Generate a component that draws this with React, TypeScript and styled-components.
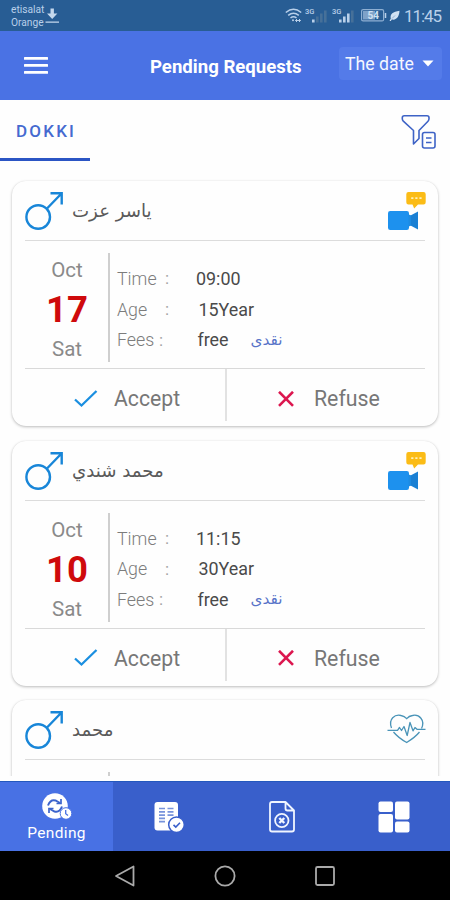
import React from "react";
import styled, { createGlobalStyle } from "styled-components";

const GlobalStyle = createGlobalStyle`
  * { box-sizing: border-box; }
  body { margin: 0; background: #fefefe; font-family: Roboto, "DejaVu Sans", sans-serif; }
  svg { display: block; flex: none; }
`;

const ButtonBase = styled.button`
  margin: 0;
  padding: 0;
  border: 0;
  background: none;
  font-family: inherit;
`;

const Screen = styled.div`
  width: 450px;
  height: 900px;
  display: flex;
  flex-direction: column;
  overflow: hidden;
  background: #fefefe;
`;

const StatusBar = styled.div`
  height: 31px;
  flex: none;
  display: flex;
  align-items: center;
  justify-content: space-between;
  padding: 0 9px 0 11px;
  background: #285d94;
  color: #b9d0ea;
`;

const StatusGroup = styled.div`
  display: flex;
  align-items: center;
  height: 31px;
`;

const SignalSlot = styled.div`
  margin-left: 3px;
`;

const BatterySlot = styled.div`
  margin: 0 2px 0 5px;
`;

const Carrier = styled.div`
  font-size: 10.2px;
  line-height: 13.5px;
  width: 34px;
  white-space: nowrap;
  padding-top: 1px;
`;

const Clock = styled.span`
  font-size: 17px;
  line-height: 31px;
  margin-left: 4px;
  width: 37px;
  letter-spacing: -1.1px;
  padding-top: 1px;
  white-space: nowrap;
`;

const Header = styled.header`
  height: 69px;
  flex: none;
  display: flex;
  align-items: center;
  padding: 0 8px 0 24px;
  background: #4a72e4;
  color: #fff;
`;

const Title = styled.h1`
  flex: 1;
  margin: 0;
  padding: 2px 0 0 102px;
  font-size: 18.6px;
  font-weight: 700;
  line-height: 24px;
  white-space: nowrap;
`;

const SortSelect = styled(ButtonBase)`
  width: 103px;
  height: 33px;
  margin-bottom: 4px;
  border-radius: 4px;
  background: #547be9;
  color: #f4f7ff;
  display: flex;
  align-items: center;
  justify-content: space-between;
  padding: 0 8px 0 6px;
  font-size: 17.7px;
`;

const Tabs = styled.div`
  height: 60.5px;
  flex: none;
  display: flex;
  justify-content: space-between;
  padding-right: 14px;
`;

const Tab = styled.div`
  width: 90px;
  height: 60.5px;
  border-bottom: 3px solid #2b55c4;
  padding: 1px 0 0 16px;
  font-size: 17px;
  line-height: 61px;
  font-weight: 500;
  letter-spacing: 2.2px;
  color: #456ad0;
`;

const FilterSlot = styled.div`
  padding-top: 14px;
`;

const List = styled.main`
  height: 615.5px;
  flex: none;
  overflow: hidden;
  padding: 20.5px 12px 0;
  display: flex;
  flex-direction: column;
  gap: 14.7px;
`;

const ListGap = styled.div`
  height: 5px;
  flex: none;
`;

const Card = styled.article`
  height: 245px;
  flex: none;
  padding: 0 13px;
  border-radius: 14px;
  background: #fefefe;
  box-shadow: 0 1px 3px rgba(0, 0, 0, 0.26), 0 0 1px rgba(0, 0, 0, 0.08);
`;

const CardHead = styled.div`
  height: 60px;
  border-bottom: 1.5px solid #dcdcdc;
  display: flex;
`;

const Patient = styled.div`
  flex: 1;
  direction: rtl;
  text-align: right;
  display: flex;
  justify-content: flex-end;
  font-family: "DejaVu Sans", sans-serif;
  font-size: 18.2px;
  line-height: 59px;
  color: #5a5a5a;
  white-space: nowrap;
`;

const GenderSlot = styled.div`
  width: 47px;
  padding-top: 10px;
`;

const KindSlot = styled.div`
  width: 38px;
  padding-top: 10px;
`;

const CardBody = styled.div`
  height: 128px;
  border-bottom: 1.5px solid #d9d9d9;
  display: flex;
`;

const DateColumn = styled.div`
  width: 85px;
  height: 109px;
  margin-top: 12px;
  border-right: 2.5px solid #cfcfcf;
  display: flex;
  flex-direction: column;
  align-items: center;
  font-size: 20.5px;
  color: #8a8a8a;
  padding-left: 1px;
`;

const DateWord = styled.span`
  line-height: 34px;
`;

const Day = styled.strong`
  font-size: 36.5px;
  font-weight: 700;
  line-height: 45px;
  color: #cf0a0c;
`;

const Details = styled.div`
  padding: 22px 0 0 7px;
`;

const DetailRow = styled.div`
  height: 30.7px;
  display: flex;
  align-items: center;
  font-size: 18px;
  white-space: nowrap;
`;

const Label = styled.span<{ $width: number }>`
  width: ${(p) => p.$width}px;
  font-weight: 300;
  font-size: 17.8px;
  color: #7c7c7c;
`;

const Colon = styled.span<{ $width: number }>`
  width: ${(p) => p.$width}px;
  color: #a3a3a3;
  font-size: 17px;
`;

const Value = styled.span`
  color: #4a4a4a;
  font-size: 17.9px;
`;

const Payment = styled.span`
  margin-left: 22px;
  font-family: "DejaVu Sans", sans-serif;
  font-size: 15.3px;
  color: #5873c8;
`;

const Actions = styled.div`
  height: 57px;
  display: flex;
`;

const AcceptButton = styled(ButtonBase)`
  width: 202px;
  height: 52px;
  border-right: 2.5px solid #e2e2e2;
  display: flex;
  align-items: center;
  gap: 16px;
  padding: 7px 0 0 49px;
  font-size: 21.2px;
  color: #777;
`;

const RefuseButton = styled(ButtonBase)`
  width: 198px;
  height: 57px;
  display: flex;
  align-items: center;
  gap: 20px;
  padding: 2px 0 0 51px;
  font-size: 21.3px;
  color: #777;
`;

const BottomNav = styled.nav`
  height: 70px;
  flex: none;
  display: grid;
  grid-template-columns: 113px 112px 113px 112px;
  background: #395fcb;
  border-top: 1px solid #2458bd;
`;

const NavItem = styled(ButtonBase)<{ $active?: boolean }>`
  display: flex;
  flex-direction: column;
  align-items: center;
  justify-content: ${(p) => (p.$active ? "flex-start" : "center")};
  padding-top: ${(p) => (p.$active ? 11 : 0)}px;
  background: ${(p) => (p.$active ? "#4871e4" : "transparent")};
  color: #fff;
`;

const NavLabel = styled.span`
  font-size: 15.5px;
  line-height: 20px;
  margin-top: 3px;
  letter-spacing: 0.35px;
`;

const SystemNav = styled.div`
  height: 49px;
  flex: none;
  background: #000;
  display: flex;
  justify-content: center;
  align-items: center;
  gap: 78px;
`;

const DownloadIcon = () => (
  <svg width="15" height="16" viewBox="0 0 15 16" fill="#c4d8ed">
    <path d="M5.500 .5h3.400v4.900h3.500L7.200 11 2 5.400h3.500zM.5 13.500h13.500v1.200H.5z" />
  </svg>
);

const WifiIcon = () => (
  <svg width="17" height="15" viewBox="0 0 17 15" fill="none" stroke="#b9d0ea" strokeWidth="1.500">
    <path d="M.8 4.500Q8.500-2 16.200 4.500M3.200 7.300Q8.500 3 13.800 7.300M5.500 10Q8.500 7.500 11.500 10" />
    <circle cx="8" cy="12.300" r="1" fill="#b9d0ea" stroke="none" />
    <path d="M10.500 12.500h5M12 11l-1.500 1.500L12 14M14 11l1.500 1.500L14 14" strokeWidth="1" />
  </svg>
);

const SignalIcon = ({ bars }: { bars: number }) => (
  <svg width="24" height="18" viewBox="0 0 24 18">
    <text x="0" y="7" fontSize="7.500" fontWeight="500" fill="#b9d0ea" fontFamily="Roboto">3G</text>
    {[0, 1, 2, 3].map((i) => (
      <rect
        key={i}
        x={7 + i * 4}
        y={12.5 - i * 3}
        width="2.600"
        height={3 + i * 3}
        fill={i < bars ? "#b9d0ea" : "#467099"}
      />
    ))}
  </svg>
);

const BatteryIcon = () => (
  <svg width="26" height="13" viewBox="0 0 26 13">
    <rect x=".6" y=".6" width="22" height="11.300" rx="1.500" fill="none" stroke="#8eafd2" strokeWidth="1.200" />
    <rect x="2" y="2" width="12" height="8.500" fill="#7fa2c8" />
    <path d="M24.500 4v5" stroke="#b9d0ea" strokeWidth="1.500" />
    <text x="6.500" y="10" fontSize="10" fontWeight="700" fill="#d0e1f3" fontFamily="Roboto">54</text>
  </svg>
);

const LeafIcon = () => (
  <svg width="11" height="12" viewBox="0 0 11 12">
    <path d="M10.500.8C4 2 .8 4 1.800 8.500L.5 11h1.300l1-1.500C8 10.500 10.300 6 10.500.8z" fill="#d0e1f3" />
    <path d="M3 8.500L6 5.500" stroke="#6c93bd" strokeWidth=".6" />
  </svg>
);

const MenuIcon = () => (
  <svg width="24" height="19" viewBox="0 0 24 19" fill="#fff">
    <rect y="1" width="24" height="2.700" rx=".5" />
    <rect y="8" width="24" height="2.700" rx=".5" />
    <rect y="15" width="24" height="2.700" rx=".5" />
  </svg>
);

const FilterIcon = () => (
  <svg width="35" height="36" viewBox="0 0 35 36" fill="none" stroke="#3e63c6" strokeWidth="1.600" strokeLinejoin="round">
    <path d="M3.300 1.800H26q2 0 2 2v1q0 1.400-1 2.400L18 16.500v8L12.500 30V16.500L2.300 7.200q-1-1-1-2.400v-1q0-2 2-2z" />
    <rect x="21.500" y="18.500" width="12.500" height="15.500" rx="2" />
    <path d="M25 24h5.500M25 28.500h5.500" />
  </svg>
);

const MaleIcon = () => (
  <svg width="38" height="40" viewBox="0 0 38 40" fill="none" stroke="#1886d8" strokeWidth="2.400">
    <circle cx="13.200" cy="26" r="11.800" />
    <path d="M22 17.500L36.500 2.500M25.500 2.200h11.200V13.500" />
  </svg>
);

const VideoIcon = () => (
  <svg width="40" height="40" viewBox="0 0 40 40">
    <path d="M21.500 1h15q2.200 0 2.200 2.200v8q0 2.200-2.200 2.200H31l-3.800 4.200-1.700-4.200h-4q-2.200 0-2.200-2.200V3.200Q19.300 1 21.500 1z" fill="#fbbc16" />
    <path d="M24.200 7.200h2.200M28.300 7.200h2.200M32.400 7.200h2.200" stroke="#fff0b8" strokeWidth="1.800" />
    <rect x="1" y="20" width="21" height="19" rx="2.200" fill="#1d91ee" />
    <path d="M21.500 23.500l2.500.8v10.400l-2.500.8z" fill="#1d8be2" />
    <path d="M24 24.300l7-3.800v18l-7-3.800z" fill="#1a80d4" />
  </svg>
);

const HeartIcon = () => (
  <svg width="40" height="40" viewBox="0 0 40 40" fill="none" stroke="#4a94b8" strokeWidth="1.300" strokeLinejoin="round">
    <path d="M4.500 18C1 9 8 4 14 5.500q3.500.5 5.700 3.200Q22 6 25.500 5.500C32 4 38.500 10 34.500 18.500M6.500 22q5 6 13.200 10.500Q28.500 27 32.500 22" />
    <path d="M.5 20.300h10l2-2.800 2 3 2.500-4 3.200 9L23 12.500l3 8.300 2-3.300 2 1.800h8.500" />
  </svg>
);

const CheckIcon = () => (
  <svg width="24" height="20" viewBox="0 0 24 20" fill="none" stroke="#1b8fe0" strokeWidth="2.300">
    <path d="M1 10.500l6.500 6L22.500 2" />
  </svg>
);

const CrossIcon = () => (
  <svg width="16" height="16" viewBox="0 0 16 16" stroke="#dc174f" strokeWidth="2.600">
    <path d="M1 .8l14 14M15 .8L1 14.800" />
  </svg>
);

const PendingIcon = () => (
  <svg width="32" height="27" viewBox="0 0 32 27">
    <circle cx="14" cy="13" r="12.800" fill="#fff" />
    <g fill="none" stroke="#3c64cc" strokeWidth="2">
      <path d="M7 12.500Q9.500 6 14.500 7.500l4.500 2.500M21 13.500Q18.500 20 13.500 18.500l-4.500-2.500" />
      <path d="M20 6v4.500h-4.500M8 20v-4.500h4.500" strokeWidth="1.700" />
    </g>
    <circle cx="25" cy="20.500" r="5.800" fill="#fff" stroke="#4871e4" strokeWidth="1" />
    <path d="M24.700 17v3.700l2.300 1.700" fill="none" stroke="#4871e4" strokeWidth="1.300" />
  </svg>
);

const ApprovedIcon = () => (
  <svg width="30" height="32" viewBox="0 0 30 32">
    <rect x=".5" y="1" width="23.500" height="28.500" rx="3" fill="#fff" />
    <path d="M5 7.500h6M13.500 7.500h6M5 10.800h6M13.500 10.800h6M5 14.100h6M13.500 14.100h6M5 17.400h6M5 20.700h6" stroke="#7793db" strokeWidth="1.700" />
    <circle cx="22.500" cy="23.800" r="7.800" fill="#fff" stroke="#395fcb" strokeWidth="1.500" />
    <path d="M19.500 23.800l2.300 2.200 4.200-4.300" fill="none" stroke="#395fcb" strokeWidth="1.600" />
  </svg>
);

const RejectedIcon = () => (
  <svg width="26" height="32" viewBox="0 0 26 32" fill="none" stroke="#f0f5ff" strokeWidth="1.800" strokeLinejoin="round">
    <path d="M3 1h13.500L25 9.500V28.500q0 2-2 2H3q-2 0-2-2V3q0-2 2-2zM16.500 1v6.500q0 2 2 2H25" />
    <circle cx="12.800" cy="19.500" r="6.700" />
    <path d="M10.300 17l5 5M15.300 17l-5 5" strokeWidth="2.400" />
  </svg>
);

const DashboardIcon = () => (
  <svg width="32" height="32" viewBox="0 0 32 32" fill="#fff">
    <rect x=".5" y=".5" width="14.500" height="10.500" rx="2" />
    <rect x="17" y=".5" width="14.500" height="18" rx="2" />
    <rect x=".5" y="13" width="14.500" height="18.500" rx="2" />
    <rect x="17" y="20.500" width="14.500" height="11" rx="2" />
  </svg>
);

type Visit = { day: string; time: string; age: string };
type Request = { name: string; video: boolean; visit?: Visit };

const requests: Request[] = [
  { name: "ياسر عزت", video: true, visit: { day: "17", time: "09:00", age: "15Year" } },
  { name: "محمد شندي", video: true, visit: { day: "10", time: "11:15", age: "30Year" } },
  { name: "محمد", video: false },
];

const VisitDetails = ({ visit }: { visit: Visit }) => (
  <>
    <CardBody>
      <DateColumn>
        <DateWord>Oct</DateWord>
        <Day>{visit.day}</Day>
        <DateWord>Sat</DateWord>
      </DateColumn>
      <Details>
        <DetailRow>
          <Label $width={48}>Time</Label><Colon $width={31}>:</Colon>
          <Value>{visit.time}</Value>
        </DetailRow>
        <DetailRow>
          <Label $width={48}>Age</Label><Colon $width={33.5}>:</Colon>
          <Value>{visit.age}</Value>
        </DetailRow>
        <DetailRow>
          <Label $width={42}>Fees</Label><Colon $width={38.5}>:</Colon>
          <Value>free</Value>
          <Payment>نقدى</Payment>
        </DetailRow>
      </Details>
    </CardBody>
    <Actions>
      <AcceptButton><CheckIcon />Accept</AcceptButton>
      <RefuseButton><CrossIcon />Refuse</RefuseButton>
    </Actions>
  </>
);

const RequestCard = ({ request }: { request: Request }) => (
  <Card>
    <CardHead>
      <GenderSlot><MaleIcon /></GenderSlot>
      <Patient>{request.name}</Patient>
      <KindSlot>{request.video ? <VideoIcon /> : <HeartIcon />}</KindSlot>
    </CardHead>
    {request.visit ? <VisitDetails visit={request.visit} /> : <CardBody><DateColumn /></CardBody>}
  </Card>
);

export default function App() {
  return (
    <Screen>
      <GlobalStyle />
      <StatusBar>
        <StatusGroup>
          <Carrier>etisalat<br />Orange</Carrier>
          <DownloadIcon />
        </StatusGroup>
        <StatusGroup>
          <WifiIcon />
          <SignalSlot><SignalIcon bars={1} /></SignalSlot>
          <SignalSlot><SignalIcon bars={3} /></SignalSlot>
          <BatterySlot><BatteryIcon /></BatterySlot>
          <LeafIcon />
          <Clock>11:45</Clock>
        </StatusGroup>
      </StatusBar>
      <Header>
        <MenuIcon />
        <Title>Pending Requests</Title>
        <SortSelect>
          The date
          <svg width="12" height="7" viewBox="0 0 12 7"><path d="M.5.5h11L6 6.500z" fill="#fff" /></svg>
        </SortSelect>
      </Header>
      <Tabs>
        <Tab>DOKKI</Tab>
        <FilterSlot><FilterIcon /></FilterSlot>
      </Tabs>
      <List>
        {requests.map((r) => <RequestCard key={r.name} request={r} />)}
      </List>
      <ListGap />
      <BottomNav>
        <NavItem $active><PendingIcon /><NavLabel>Pending</NavLabel></NavItem>
        <NavItem><ApprovedIcon /></NavItem>
        <NavItem><RejectedIcon /></NavItem>
        <NavItem><DashboardIcon /></NavItem>
      </BottomNav>
      <SystemNav>
        <svg width="22" height="22" viewBox="0 0 22 22" fill="none" stroke="#aaa" strokeWidth="1.800" strokeLinejoin="round"><path d="M19.500 1.500v19L2 11z" /></svg>
        <svg width="22" height="22" viewBox="0 0 22 22" fill="none" stroke="#aaa" strokeWidth="1.800"><circle cx="11" cy="11" r="9.600" /></svg>
        <svg width="22" height="22" viewBox="0 0 22 22" fill="none" stroke="#aaa" strokeWidth="1.800"><rect x="2" y="2" width="18" height="18" rx="1.500" /></svg>
      </SystemNav>
    </Screen>
  );
}
